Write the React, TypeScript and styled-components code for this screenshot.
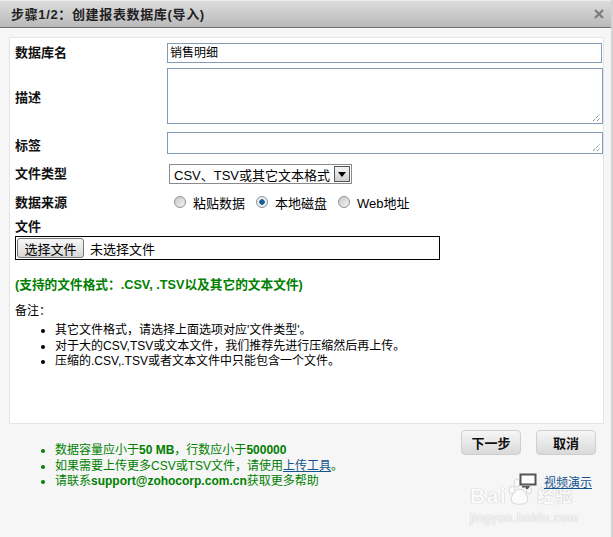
import React from "react";
import styled, { createGlobalStyle } from "styled-components";

const GlobalStyle = createGlobalStyle`
  html, body {
    margin: 0;
    padding: 0;
    background: #f6f6f6;
  }
  body {
    font-family: "Liberation Sans", "Noto Sans CJK SC", sans-serif;
    font-size: 12px;
    color: #000;
  }
`;

const Dialog = styled.div`
  position: relative;
  width: 613px;
  height: 537px;
  box-sizing: border-box;
  overflow: hidden;
  background: #f6f6f6;
  border-right: 2px solid #d4d4d4;
`;

const TitleBar = styled.div`
  display: flex;
  align-items: center;
  justify-content: space-between;
  box-sizing: border-box;
  height: 28px;
  padding: 0 7px 1px 11px;
  background: linear-gradient(#dcdcdc, #b9b9b9);
  border-top: 1px solid #eeeeee;
  border-bottom: 1px solid #6f6f6f;
`;

const Title = styled.div`
  font-size: 13px;
  font-weight: 700;
  letter-spacing: 0.65px;
  color: #222;
`;

const Card = styled.div`
  box-sizing: border-box;
  width: 595px;
  height: 387px;
  margin: 9px 0 0 9px;
  padding: 5px 0 0 5px;
  background: #fff;
  border: 1px solid #e4e4e4;
`;

const Row = styled.div<{ $height: number; $after: number }>`
  display: flex;
  align-items: center;
  height: ${(p) => p.$height}px;
  margin-bottom: ${(p) => p.$after}px;
`;

const Label = styled.div<{ $nudge?: number }>`
  width: 152px;
  flex: none;
  padding: ${(p) => p.$nudge || 0}px 0 3px;
  font-size: 13px;
  font-weight: 700;
  color: #111;
`;

const TextInput = styled.div`
  box-sizing: border-box;
  width: 435px;
  height: 20px;
  padding-left: 2px;
  border: 1px solid #7f9db9;
  font-size: 12px;
  line-height: 18px;
  background: #fff;
`;

const TextArea = styled.div<{ $height: number }>`
  position: relative;
  box-sizing: border-box;
  width: 437px;
  height: ${(p) => p.$height}px;
  border: 1px solid #7f9db9;
  background: #fff;
`;

const Grip = styled.svg`
  position: absolute;
  right: 1px;
  bottom: 1px;
`;

const SelectBox = styled.div`
  display: flex;
  align-items: center;
  justify-content: space-between;
  box-sizing: border-box;
  width: 183px;
  height: 20px;
  margin-left: 2px;
  padding: 0 1px 0 4px;
  border: 1px solid #8a8a8a;
  font-size: 13px;
  background: #fff;
`;

const SelectArrow = styled.div`
  display: flex;
  align-items: center;
  justify-content: center;
  box-sizing: border-box;
  width: 16px;
  height: 16px;
  border: 1px solid #555;
  background: linear-gradient(#f4f4f4, #cfcfcf);
`;

const RadioGroup = styled.div`
  display: flex;
  align-items: center;
  margin-left: 7px;
`;

const RadioItem = styled.label`
  display: flex;
  align-items: center;
  gap: 7px;
  margin-right: 11px;
  font-size: 13px;
`;

const RadioDot = styled.span<{ $on?: boolean }>`
  display: block;
  box-sizing: border-box;
  width: 12px;
  height: 12px;
  border-radius: 50%;
  border: 1px solid #8e8f8f;
  background: ${(p) =>
    p.$on
      ? "radial-gradient(circle, #1a5f96 0 2.5px, #e8eef2 3px)"
      : "linear-gradient(135deg, #c9c9c9, #f4f4f4)"};
`;

const FileBox = styled.div`
  display: flex;
  align-items: center;
  gap: 6px;
  box-sizing: border-box;
  width: 425px;
  height: 24px;
  padding-left: 1px;
  border: 1px solid #000;
  font-size: 13px;
`;

const FileButton = styled.div`
  display: flex;
  align-items: center;
  justify-content: center;
  box-sizing: border-box;
  width: 67px;
  height: 20px;
  border: 1px solid #777;
  border-radius: 3px;
  background: linear-gradient(#f8f8f8, #d6d6d6);
  font-size: 13px;
`;

const Formats = styled.div`
  margin-top: 17px;
  font-size: 12.7px;
  font-weight: 700;
  line-height: 16px;
  color: #008000;
`;

const Note = styled.div`
  margin-top: 10px;
  font-size: 12px;
  line-height: 16px;
`;

const Bullets = styled.ul<{ $green?: boolean }>`
  margin: 0;
  padding: 0 0 0 ${(p) => (p.$green ? 55 : 40)}px;
  font-size: 12px;
  line-height: 15.5px;
  color: ${(p) => (p.$green ? "#008000" : "#000")};
`;

const NoteList = styled(Bullets)`
  margin-top: 4px;
`;

const Footer = styled.div`
  display: flex;
  justify-content: space-between;
  padding: 6px 15px 0 0;
`;

const FooterList = styled(Bullets)`
  margin-top: 13px;
`;

const ActionColumn = styled.div`
  display: flex;
  flex-direction: column;
  align-items: flex-end;
`;

const Actions = styled.div`
  display: flex;
  gap: 15px;
`;

const ActionButton = styled.div`
  display: flex;
  align-items: center;
  justify-content: center;
  width: 60px;
  height: 25px;
  box-sizing: border-box;
  border: 1px solid #cfcfcf;
  border-radius: 4px;
  background: linear-gradient(#f6f6f6, #d9d9d9);
  font-size: 13px;
  font-weight: 700;
  color: #111;
`;

const VideoLink = styled.div`
  position: relative;
  z-index: 1;
  display: flex;
  align-items: flex-start;
  gap: 7px;
  margin: 18px 4px 0 0;
`;

const Link = styled.a`
  color: #14538e;
  text-decoration: underline;
  font-size: 12px;
`;

const VideoAnchor = styled(Link)`
  margin-top: 3px;
  line-height: 15px;
`;

const Watermark = styled.div`
  position: absolute;
  left: 470px;
  top: 478px;
  width: 110px;
  color: #fbfbfb;
  pointer-events: none;
  text-shadow: 0 0 1px #c4c4c4, 0 0 1px #c4c4c4;
`;

const MarkBrand = styled.div`
  display: flex;
  align-items: flex-end;
  height: 28px;
  font-weight: 700;
  white-space: nowrap;
`;

const MarkLatin = styled.span`
  font-size: 21px;
  line-height: 20px;
  letter-spacing: 1.5px;
`;

const MarkPaw = styled.svg`
  flex: none;
  margin: 0 5px 0 0;
`;

const MarkCjk = styled.span`
  font-size: 17px;
  line-height: 14px;
  padding-bottom: 2px;
  letter-spacing: 1px;
`;

const MarkSub = styled.div`
  margin-top: 5px;
  font-size: 12px;
  line-height: 14px;
  letter-spacing: 0.7px;
`;

const App = () => {
  return (
    <>
      <GlobalStyle />
      <Dialog>
        <TitleBar>
          <Title>步骤1/2：创建报表数据库(导入)</Title>
          <svg width="10" height="10" viewBox="0 0 10 10">
            <path d="M1 1 L9 9 M9 1 L1 9" stroke="#7f7f7f" strokeWidth="2.4" />
          </svg>
        </TitleBar>

        <Card>
          <Row $height={20} $after={5}>
            <Label>数据库名</Label>
            <TextInput>销售明细</TextInput>
          </Row>
          <Row $height={56} $after={8}>
            <Label $nudge={3}>描述</Label>
            <TextArea $height={56}>
              <Grip width="9" height="9" viewBox="0 0 9 9">
                <path d="M1 8 L8 1 M5 8 L8 5" stroke="#555" strokeDasharray="1 1" />
              </Grip>
            </TextArea>
          </Row>
          <Row $height={22} $after={10}>
            <Label $nudge={6}>标签</Label>
            <TextArea $height={22}>
              <Grip width="9" height="9" viewBox="0 0 9 9">
                <path d="M1 8 L8 1 M5 8 L8 5" stroke="#555" strokeDasharray="1 1" />
              </Grip>
            </TextArea>
          </Row>
          <Row $height={20} $after={8}>
            <Label>文件类型</Label>
            <SelectBox>
              CSV、TSV或其它文本格式
              <SelectArrow>
                <svg width="8" height="5" viewBox="0 0 8 5">
                  <path d="M0 0 H8 L4 5 Z" fill="#000" />
                </svg>
              </SelectArrow>
            </SelectBox>
          </Row>
          <Row $height={20} $after={6}>
            <Label $nudge={2}>数据来源</Label>
            <RadioGroup>
              <RadioItem>
                <RadioDot />
                粘贴数据
              </RadioItem>
              <RadioItem>
                <RadioDot $on />
                本地磁盘
              </RadioItem>
              <RadioItem>
                <RadioDot />
                Web地址
              </RadioItem>
            </RadioGroup>
          </Row>
          <Row $height={18} $after={0}>
            <Label>文件</Label>
          </Row>
          <FileBox>
            <FileButton>选择文件</FileButton>
            未选择文件
          </FileBox>
          <Formats>(支持的文件格式：.CSV, .TSV以及其它的文本文件)</Formats>
          <Note>备注：</Note>
          <NoteList>
            <li>其它文件格式，请选择上面选项对应'文件类型'。</li>
            <li>对于大的CSV,TSV或文本文件，我们推荐先进行压缩然后再上传。</li>
            <li>压缩的.CSV,.TSV或者文本文件中只能包含一个文件。</li>
          </NoteList>
        </Card>

        <Footer>
          <FooterList $green>
            <li>
              数据容量应小于<b>50 MB</b>，行数应小于<b>500000</b>
            </li>
            <li>
              如果需要上传更多CSV或TSV文件，请使用<Link href="#">上传工具</Link>。
            </li>
            <li>
              请联系<b>support@zohocorp.com.cn</b>获取更多帮助
            </li>
          </FooterList>
          <ActionColumn>
            <Actions>
              <ActionButton>下一步</ActionButton>
              <ActionButton>取消</ActionButton>
            </Actions>
            <VideoLink>
              <svg width="18" height="17" viewBox="0 0 18 17">
                <path d="M1.5 1.5 H16.5 V11.5 H1.5 Z" fill="#fff" stroke="#555" strokeWidth="2" />
                <path d="M3 13 H11 L9 16 H7 V14.5 H3 Z" fill="#555" />
              </svg>
              <VideoAnchor href="#">视频演示</VideoAnchor>
            </VideoLink>
          </ActionColumn>
        </Footer>

        <Watermark>
          <MarkBrand>
            <MarkLatin>Bai</MarkLatin>
            <MarkPaw width="25" height="28" viewBox="0 0 25 28">
              <g fill="#fbfbfb" stroke="#d6d6d6">
                <ellipse cx="5" cy="12" rx="3" ry="4" />
                <ellipse cx="10" cy="5" rx="3" ry="4" />
                <ellipse cx="17" cy="5" rx="3" ry="4" />
                <ellipse cx="22" cy="12" rx="2.5" ry="4" />
                <path d="M12.5 11 C17 11 23 20 20 24 C17 27 8 27 5 24 C2 20 8 11 12.5 11 Z" />
              </g>
            </MarkPaw>
            <MarkCjk>经验</MarkCjk>
          </MarkBrand>
          <MarkSub>jingyan.baidu.com</MarkSub>
        </Watermark>
      </Dialog>
    </>
  );
};

export default App;
